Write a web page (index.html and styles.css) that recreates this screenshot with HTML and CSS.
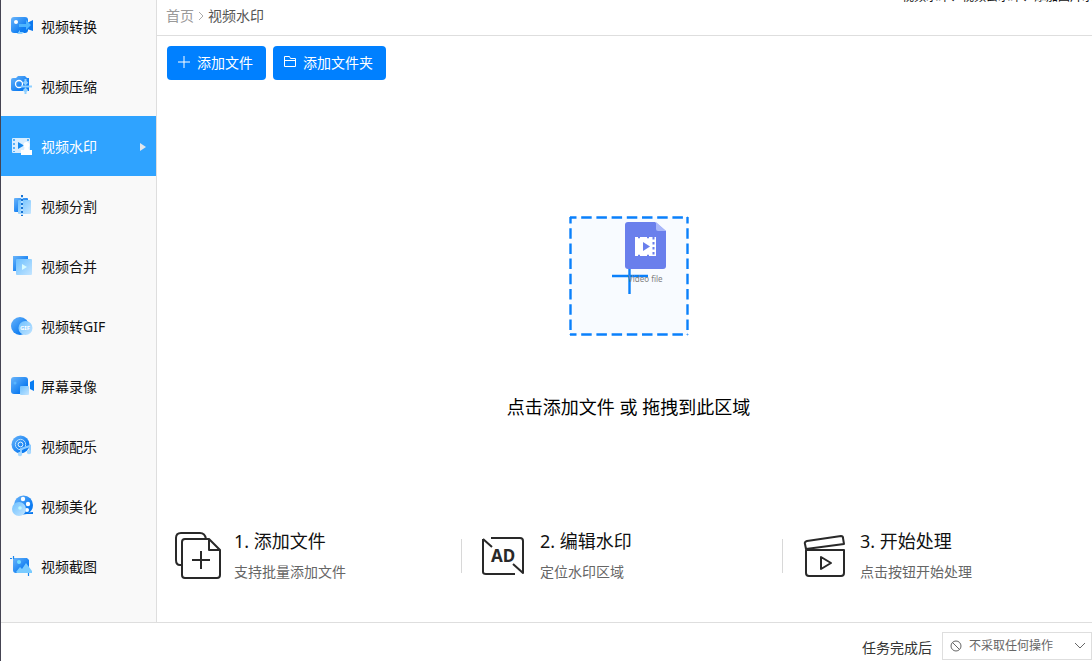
FILE: index.html
```html
<!DOCTYPE html>
<html lang="zh-CN">
<head>
<meta charset="utf-8">
<title>视频水印</title>
<link rel="stylesheet" href="styles.css">
</head>
<body>
<svg class="defs" aria-hidden="true">
  <defs>
    <linearGradient id="deep" x1="0" y1="0" x2="1" y2="1"><stop offset="0" stop-color="#6bb5fa"/><stop offset=".7" stop-color="#0f7df2"/><stop offset="1" stop-color="#0878f0"/></linearGradient>
    <linearGradient id="pale" x1="0" y1="0" x2="1" y2="1"><stop offset="0" stop-color="#6cc0ff"/><stop offset="1" stop-color="#c4e5ff"/></linearGradient>
  </defs>
</svg>
<div class="app">
  <div class="workspace">
    <nav class="sidebar">
      <a class="item" href="#"><svg class="icon" viewBox="0 0 24 24"><rect x="1" y="3" width="17" height="16" rx="3" fill="url(#deep)"/><path d="M17 9l6-3v11l-6-2z" fill="#0c78ee"/><circle cx="6" cy="8" r="2" fill="#fff"/><path d="M9 10h7V6l5 5-5 5v-3H9z" fill="#4db5ff"/><path d="M12 20H7l3-4v2h4z" fill="#8bd0ff"/></svg>视频转换</a>
      <a class="item" href="#"><svg class="icon" viewBox="0 0 24 24"><path d="M3 4h3l2-2h7l2 2h2v13H3a2 2 0 0 1-2-2V6a2 2 0 0 1 2-2z" fill="url(#deep)"/><circle cx="9" cy="10" r="3.500" fill="none" stroke="#fff" stroke-width="1.300"/><path d="M15.500 5v5m-2-2l2 2 2-2M15.500 20v-5m-2 2l2-2 2 2M11 12.500h11" fill="none" stroke="#8fd0ff" stroke-width="2"/></svg>视频压缩</a>
      <a class="item active" href="#" aria-current="page"><svg class="icon" viewBox="0 0 24 24"><rect x="2" y="4" width="18" height="15" rx="1" fill="#d9eeff"/><path d="M4 5v13M18 5v5" stroke="#2e9efa" stroke-width="1.500" stroke-dasharray="2 2"/><path d="M8 8l6 3.500L8 15z" fill="#168aee"/><circle cx="16.500" cy="11" r="3" fill="#fff"/><path d="M15 12h3l1 4h3v5H11v-5h3z" fill="#fff"/></svg>视频水印<span class="arrow"></span></a>
      <a class="item" href="#"><svg class="icon" viewBox="0 0 24 24"><rect x="4" y="4" width="14" height="14" rx="1" fill="url(#deep)"/><rect x="8" y="6" width="13" height="14" rx="1" fill="url(#pale)"/><path d="M12 2v20" stroke="#b9e0ff" stroke-width="2"/><path d="M12 1v21" stroke="#1873d4" stroke-width="2" stroke-dasharray="2 2"/></svg>视频分割</a>
      <a class="item" href="#"><svg class="icon" viewBox="0 0 24 24"><rect x="3" y="2" width="15" height="15" fill="url(#deep)"/><rect x="6" y="5" width="16" height="16" rx="1" fill="url(#pale)"/><path d="M12 10l5 3-5 3z" fill="#d8fbff"/></svg>视频合并</a>
      <a class="item" href="#"><svg class="icon" viewBox="0 0 24 24"><circle cx="10" cy="12" r="9" fill="url(#deep)"/><circle cx="15.500" cy="14" r="7" fill="url(#pale)"/><text class="gif" x="10" y="16">GIF</text></svg>视频转GIF</a>
      <a class="item" href="#"><svg class="icon" viewBox="0 0 24 24"><rect x="1" y="3" width="17" height="17" rx="3" fill="url(#deep)"/><path d="M20 8l4-2v11l-4-2z" fill="#087cf2"/><circle cx="5" cy="9" r="1.500" fill="#58b5ff"/><rect x="10" y="12" width="9" height="9" rx="1" fill="url(#pale)"/></svg>屏幕录像</a>
      <a class="item" href="#"><svg class="icon" viewBox="0 0 24 24"><circle cx="10.500" cy="10.500" r="9" fill="url(#deep)"/><circle cx="10.500" cy="10.500" r="5.200" fill="none" stroke="#b8e0ff"/><circle cx="10.500" cy="10.500" r="2.400" fill="none" stroke="#e2f3ff"/><path d="M11 19v-4l9-3v6" fill="none" stroke="#8bcaff" stroke-width="2"/><circle cx="10" cy="20" r="2.200" fill="#a6d8ff"/><circle cx="19" cy="18" r="2.200" fill="#a6d8ff"/></svg>视频配乐</a>
      <a class="item" href="#"><svg class="icon" viewBox="0 0 24 24"><circle cx="13.500" cy="11" r="9.500" fill="url(#deep)"/><path d="M14 19c4 0 5-1 9-1v2h-9z" fill="#0878ee"/><g fill="#fff"><circle cx="13" cy="5" r="2.200"/><circle cx="18" cy="10" r="2.200"/><circle cx="17" cy="16" r="2"/></g><circle cx="9" cy="15" r="7" fill="url(#pale)"/><circle cx="10" cy="14" r="1.800" fill="#baf8ff"/></svg>视频美化</a>
      <a class="item" href="#"><svg class="icon" viewBox="0 0 24 24"><path d="M3 4h14l2 2v13H6a3 3 0 0 1-3-3z" fill="url(#deep)"/><path d="M0 4.500h2M3.500 2v3M18.500 17v5" stroke="#1b86ed" stroke-width="1.200"/><circle cx="9" cy="8" r="2" fill="#76ddff"/><path d="M6 18l4-5 2 2 4-6 6 8v2H7z" fill="#79cbff"/></svg>视频截图</a>
    </nav>
    <main class="main">
      <header class="topbar">
        <nav class="crumbs">
          <a href="#">首页</a>
          <svg class="chevron" viewBox="0 0 6 10"><path d="M1 1l4 4-4 4"/></svg>
          <span>视频水印</span>
        </nav>
        <p class="notice">视频水印、视频去水印、添加图片水印</p>
      </header>
      <div class="content">
        <div class="toolbar">
          <button class="add" type="button"><svg viewBox="0 0 14 14"><path d="M7 1v12M1 7h12"/></svg>添加文件</button>
          <button class="add" type="button"><svg viewBox="0 0 14 14"><path d="M1.500 1.500h5l1 2h5v8h-11zM1.500 5.500h11"/></svg>添加文件夹</button>
        </div>
        <button class="drop" type="button">
          <svg class="drop-art" viewBox="0 0 120 120">
            <rect x="1" y="1" width="118" height="118" fill="#f8fbff"/>
            <path d="M1 1.500h118M1 118.500h118M1.500 1v118M118.500 1v118" fill="none" stroke="#0a80fb" stroke-width="2.400" stroke-dasharray="10.500 4.700" stroke-dashoffset="4"/>
            <path d="M60.500 44v34M43 60h36" fill="none" stroke="#0a80fb" stroke-width="2.400"/>
            <path d="M59 6h27l11 9v35q0 3-3 3H59q-3 0-3-3V9q0-3 3-3z" fill="#6a7fec"/>
            <path d="M87 6l10 9h-8q-2 0-2-2z" fill="#a9b7fa"/>
            <rect x="66" y="21" width="21" height="19" fill="#fff"/>
            <path d="M74 26l7 4.500-7 4.500z" fill="#6a7fec"/>
            <path d="M84.500 21v19" stroke="#6a7fec" stroke-width="2" stroke-dasharray="2.500 2.500"/>
            <path d="M69 21.500h2M69 39.500h2M78 21.500h2M78 39.500h2" stroke="#6a7fec" stroke-width="1.500"/>
            <text class="file-label" x="59" y="66">Video file</text>
          </svg>
          <span>点击添加文件 或 拖拽到此区域</span>
        </button>
        <section class="steps">
          <div class="step">
            <svg class="step-icon" viewBox="1 0 48 48"><path d="M6 33H5q-4 0-4-5V6q0-5 5-5h19q5 0 6 6M10 7h24l11 11v25q0 3-3 3H10q-3 0-3-3V10q0-3 3-3zM34 8v10h11M26 19v18M17 28h18"/></svg>
            <div><h2>1. 添加文件</h2><p>支持批量添加文件</p></div>
          </div>
          <div class="step">
            <svg class="step-icon" viewBox="0 0 48 48"><path d="M9 6h29q3 0 3 3v32l-10-9M1 7l9 8M1 7v33q0 2 3 2h29"/><text class="ad" x="9" y="30">AD</text></svg>
            <div><h2>2. 编辑水印</h2><p>定位水印区域</p></div>
          </div>
          <div class="step">
            <svg class="step-icon" viewBox="0 0 48 48"><path d="M4 17L3 12q-1-2 2-3l34-5q2 0 2 2l1 6zM4 18h38v23q0 3-3 3H7q-3 0-3-3zM19 25v12l10-6z"/></svg>
            <div><h2>3. 开始处理</h2><p>点击按钮开始处理</p></div>
          </div>
        </section>
      </div>
    </main>
  </div>
  <footer class="footer">
    <label for="after">任务完成后</label>
    <div class="picker">
      <svg class="ban" viewBox="0 0 12 12"><circle cx="6" cy="6" r="5"/><path d="M2.500 2.500l7 7"/></svg>
      <select id="after"><option>不采取任何操作</option></select>
      <svg class="caret" viewBox="0 0 12 8"><path d="M1 1l5 5 5-5"/></svg>
    </div>
  </footer>
</div>
</body>
</html>
```
FILE: styles.css
```css
* { box-sizing: border-box; }

body {
  margin: 0;
  font: 14px/20px "Noto Sans", "Noto Sans CJK SC", sans-serif;
  color: #111;
  background: #fff;
}

button, select { font: inherit; }
a { color: inherit; text-decoration: none; }
h2, p { margin: 0; font-weight: 400; }
.defs { position: absolute; width: 0; height: 0; }

.app {
  display: flex;
  flex-direction: column;
  height: 100vh;
  border-left: 1px solid #454452;
  overflow: hidden;
}

.workspace { display: flex; flex: 1; min-height: 0; }

.sidebar {
  flex: none;
  width: 156px;
  overflow: hidden;
  background: #f9f9f9;
  border-right: 1px solid #dedede;
}

.item {
  display: flex;
  align-items: center;
  gap: 7px;
  height: 60px;
  padding: 2px 10px 0 9px;
}
.item:first-child { margin-top: -4px; }
.item.active { color: #fff; background: #2fa3ff; }
.icon { width: 24px; height: 24px; margin-bottom: 2px; }
.gif { font: bold 6px "Noto Sans", sans-serif; fill: #fff; }
.arrow {
  margin-left: auto;
  border: 4px solid transparent;
  border-left: 6px solid #e0e6ec;
  border-right: 0;
}

.main { display: flex; flex: 1; flex-direction: column; min-width: 0; }

.topbar {
  display: flex;
  justify-content: space-between;
  height: 36px;
  padding-left: 9px;
  overflow: hidden;
  border-bottom: 1px solid #dedede;
}
.crumbs { display: flex; align-items: center; gap: 4px; padding-bottom: 3px; color: #555; }
.crumbs a { color: #999; }
.chevron { width: 6px; height: 10px; fill: none; stroke: #aaa; }
.notice {
  width: 190px;
  margin-top: -12px;
  overflow: hidden;
  font-size: 12px;
  line-height: 18px;
  white-space: nowrap;
}

.content { display: flex; flex: 1; flex-direction: column; padding: 10px 0 38px 10px; }
.toolbar { display: flex; gap: 7px; }
.add {
  display: flex;
  align-items: center;
  gap: 6px;
  height: 34px;
  padding: 0 13px 0 10px;
  color: #fff;
  background: #0080ff;
  border: 0;
  border-radius: 4px;
}
.add svg { width: 14px; height: 14px; margin-bottom: 2px; fill: none; stroke: #fff; }

.drop {
  display: flex;
  flex: 1;
  flex-direction: column;
  align-items: center;
  justify-content: center;
  gap: 58px;
  padding: 28px 2px 0 0;
  font-size: 18px;
  line-height: 26px;
  color: #000;
  background: none;
  border: 0;
}
.drop-art { width: 120px; height: 120px; }
.file-label { font: 8px "Noto Sans", sans-serif; fill: #7f8082; }

.steps { display: grid; grid-template-columns: 294fr 321fr 310fr; }
.step { display: flex; align-items: center; gap: 10px; padding-left: 21px; }
.step:first-child { padding-left: 9px; }
.step:last-child { padding-left: 20px; }
.step + .step {
  background: linear-gradient(#d8d8d8, #d8d8d8) left center / 1px 34px no-repeat;
}
.step-icon {
  width: 48px;
  height: 48px;
  overflow: visible;
  fill: none;
  stroke: #292929;
  stroke-width: 2;
  stroke-linejoin: round;
}
.step-icon { flex: none; }
.ad { font: bold 17px "Noto Sans", sans-serif; fill: #292929; stroke: none; }
.step h2 { font-size: 18px; line-height: 26px; }
.step p { margin-top: 6px; line-height: 24px; color: #666; }

.footer {
  display: flex;
  flex: none;
  align-items: center;
  justify-content: flex-end;
  gap: 10px;
  height: 39px;
  padding-top: 8px;
  border-top: 1px solid #dedede;
}
.footer label { padding-top: 4px; color: #333; }
.picker { position: relative; width: 150px; }
.picker select {
  display: block;
  width: 100%;
  height: 28px;
  padding: 0 26px;
  font-size: 12px;
  color: #666;
  appearance: none;
  background: #fff;
  border: 1px solid #dedede;
  border-radius: 0;
}
.picker svg { position: absolute; fill: none; stroke: #666; pointer-events: none; }
.ban { top: 8px; left: 8px; width: 12px; height: 12px; }
.caret { top: 10px; right: 6px; width: 12px; height: 8px; }
```
